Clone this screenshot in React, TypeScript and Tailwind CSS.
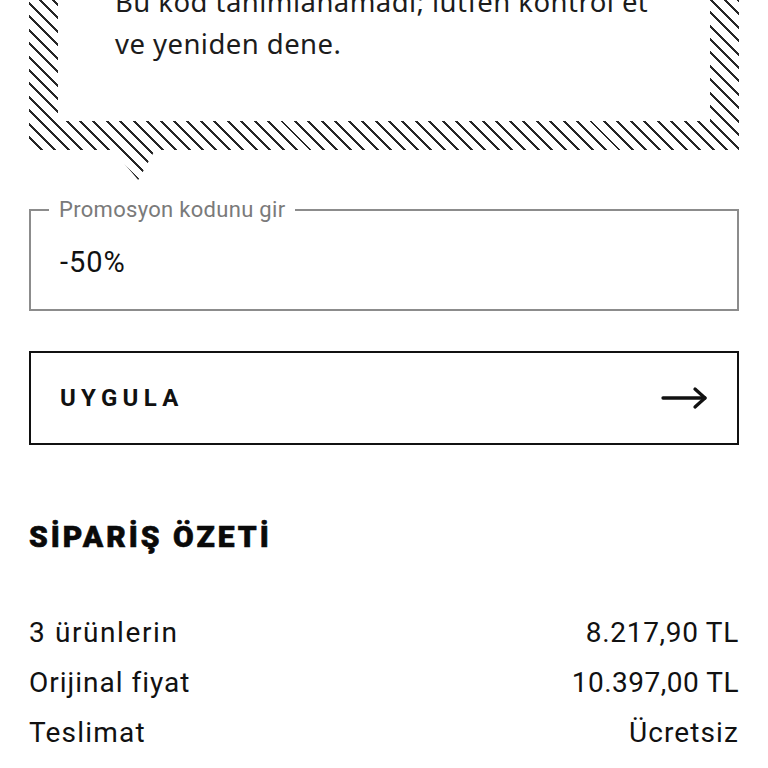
import React from "react";

const hatch =
  "bg-white bg-fixed bg-[repeating-linear-gradient(45deg,#262626_0px,#262626_2.1px,transparent_2.1px,transparent_9.5px)]";

export default function App() {
  return (
    <div className="min-h-[768px] w-[768px] overflow-hidden bg-white px-[29px] font-['Roboto',sans-serif] text-[#111]">
      {/* Speech bubble with hatched frame */}
      <div className={`-mt-[19px] px-[29px] pb-[29px] ${hatch}`}>
        <div className="bg-white pb-[56px] pl-[57px] pr-[10px] font-['Noto_Sans',sans-serif] text-[27.5px] leading-[42px] tracking-[0.45px] text-[#1c1c1c]">
          <p className="whitespace-nowrap">Bu kod tanımlanamadı; lütfen kontrol et</p>
          <p>ve yeniden dene.</p>
        </div>
      </div>
      <div
        className={`ml-[84px] h-[30px] w-[42px] [clip-path:polygon(0_0,100%_0,60%_100%)] ${hatch}`}
      />

      {/* Promo code input */}
      <fieldset className="mt-[18px] border-2 border-[#8c8c8c] px-[29px] pb-[7px]">
        <legend className="ml-[-11px] px-[10px] text-[22px] leading-[24px] tracking-[0.3px] text-[#7a7a7a]">
          Promosyon kodunu gir
        </legend>
        <div className="flex h-[80px] items-center pt-[2px] text-[29px] tracking-[1px] text-[#111]">
          -50%
        </div>
      </fieldset>

      {/* Apply button */}
      <button className="mt-[40px] flex h-[94px] w-full items-center justify-between border-2 border-[#111] pl-[29px] pr-[29px]">
        <span className="text-[24px] font-bold leading-none tracking-[0.22em] text-[#111]">
          UYGULA
        </span>
        <svg width="47" height="24" viewBox="0 0 47 24" fill="none" stroke="#111" strokeWidth="3.3" strokeLinecap="round" strokeLinejoin="round">
          <line x1="2" y1="12" x2="44" y2="12" />
          <polyline points="34,3 44,12 34,21" />
        </svg>
      </button>

      {/* Order summary */}
      <h2 className="mt-[74px] text-[30px] font-black leading-[36px] tracking-[0.1em] text-[#0a0a0a] [-webkit-text-stroke:0.6px_#0a0a0a]">
        SİPARİŞ ÖZETİ
      </h2>
      <div className="mt-[53px] flex flex-col text-[28px] leading-[50px] tracking-[0.5px] text-[#111]">
        <div className="flex justify-between">
          <span className="tracking-[1.6px]">3 ürünlerin</span>
          <span className="tracking-[0.7px]">8.217,90 TL</span>
        </div>
        <div className="flex justify-between">
          <span className="tracking-[1px]">Orijinal fiyat</span>
          <span className="tracking-[0.5px]">10.397,00 TL</span>
        </div>
        <div className="flex justify-between">
          <span className="tracking-[1.2px]">Teslimat</span>
          <span className="tracking-[1.1px]">Ücretsiz</span>
        </div>
      </div>
    </div>
  );
}
